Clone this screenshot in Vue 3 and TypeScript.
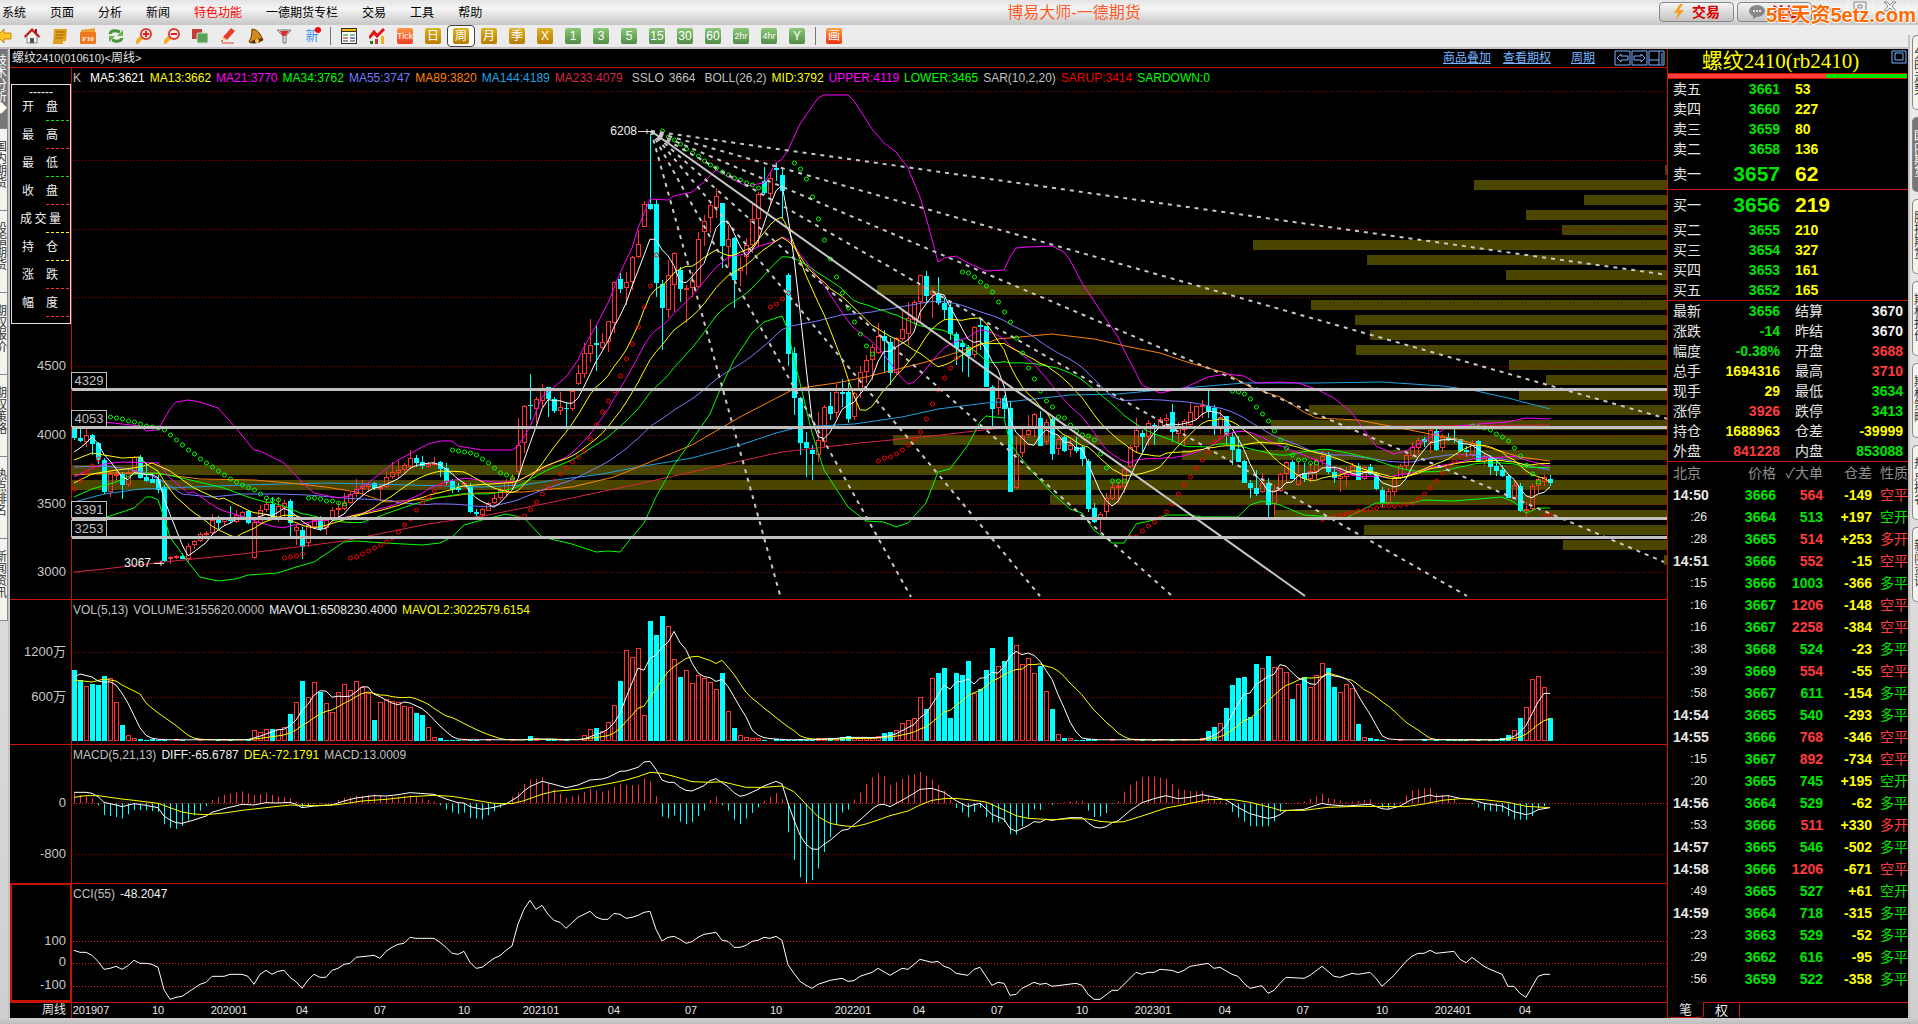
<script setup lang="ts">
type Candle = { up: boolean; top: number; bottom: number; high: number; low: number }
type Tone = 'g' | 'r' | 'y' | 'w'

const PITCH = 6
const FIRST_X = 74
const PLOT_X = 72
const PLOT_W = 1595
const barX = (i: number): number => FIRST_X + i * PITCH

const menus: string[] = ['系统', '页面', '分析', '新闻', '特色功能', '一德期货专栏', '交易', '工具', '帮助']
const periods: { t: string; k: string; wide?: boolean; on?: boolean }[] = [
  { t: 'Tick', k: 'tick', wide: true }, { t: '日', k: 'gold' }, { t: '周', k: 'gold', on: true },
  { t: '月', k: 'gold' }, { t: '季', k: 'gold' }, { t: 'X', k: 'gold' },
  { t: '1', k: 'green' }, { t: '3', k: 'green' }, { t: '5', k: 'green' }, { t: '15', k: 'green' },
  { t: '30', k: 'green' }, { t: '60', k: 'green' }, { t: '2hr', k: 'green', wide: true },
  { t: '4hr', k: 'green', wide: true }, { t: 'Y', k: 'green' },
]
const leftTabs: string[] = ['技术分析◆', '国内期货', '股指期货', '期权报价', '期权策略', '热点排名', '新闻资讯']
const rightTabs: string[] = ['分时走势', '国内期货', '股指期货', '期权报价', '期权策略', '热点排名', '新闻资讯']

const legend: { t: string; c: string }[] = [
  { t: '开盘', c: '#00e600' }, { t: '最高', c: '#ff3232' }, { t: '最低', c: '#00e600' }, { t: '收盘', c: '#ff3232' },
  { t: '成交量', c: '#ffff00' }, { t: '持仓', c: '#ffff00' }, { t: '涨跌', c: '#ff3232' }, { t: '幅度', c: '#ff3232' },
]
const kHead: { t: string; c: string; gap?: boolean }[] = [
  { t: 'K', c: '#c0c0c0' }, { t: 'MA5:3621', c: '#fff', gap: true }, { t: 'MA13:3662', c: '#ff0' }, { t: 'MA21:3770', c: '#f0f' },
  { t: 'MA34:3762', c: '#0f0' }, { t: 'MA55:3747', c: '#7878ff' }, { t: 'MA89:3820', c: '#ff8000' },
  { t: 'MA144:4189', c: '#20a0e0' }, { t: 'MA233:4079', c: '#d22846' }, { t: 'SSLO', c: '#c0c0c0', gap: true },
  { t: '3664', c: '#c0c0c0' }, { t: 'BOLL(26,2)', c: '#c0c0c0', gap: true }, { t: 'MID:3792', c: '#ff0' },
  { t: 'UPPER:4119', c: '#f0f' }, { t: 'LOWER:3465', c: '#0f0' }, { t: 'SAR(10,2,20)', c: '#c0c0c0' },
  { t: 'SARUP:3414', c: '#f00000' }, { t: 'SARDOWN:0', c: '#0f0' },
]

const candleText = `d428 438 427 440|d438 441 427 442|u435 442 428 447|d435 444 434 455|d443 460 442 464|d460 492 458 494|u474 492 471 497|u474 476 469 482|d474 485 472 499|u473 485 470 487|u457 472 456 474|d457 478 455 479|d477 481 462 482|d479 483 473 483|d479 490 475 493|d487 561 485 562|u557 559 556 564|u556 558 555 559|d556 559 553 559|u546 559 543 563
|u541 545 540 549|u534 541 532 542|u533 535 531 536|u520 533 514 535|d518 523 516 529|u519 522 517 526|d519 521 506 523|u515 522 510 523|u512 518 511 520|d511 523 510 524|u522 558 520 559|u510 523 505 525|u504 510 499 512|d504 519 497 520|u506 520 497 522|u503 508 500 520|d501 523 499 537|u527 531 524 545|d530 547 527 559|u525 543 523 547
|u520 527 518 528|d520 529 516 531|u520 528 518 535|u510 520 507 522|u508 510 502 517|u503 509 493 510|u494 503 492 504|u489 494 479 497|u486 489 480 494|u484 487 482 492|d483 488 482 490|u487 488 484 500|u477 487 471 488|u472 477 462 479|u470 473 461 478|u465 470 463 473|u458 467 450 469|d458 463 455 467|d462 466 456 469|u464 467 462 468
|u463 465 457 466|d462 469 461 477|d468 483 463 485|d481 490 479 493|d488 490 483 492|u483 487 482 488|d486 512 483 513|d512 514 509 516|u509 515 508 517|u503 511 502 511|u498 503 492 504|u490 498 487 500|u482 491 479 497|u478 482 474 487|u445 472 418 477|u406 443 405 453|d405 406 374 420|u399 409 397 423|u388 401 384 407|d387 399 387 417
|d399 411 397 413|u407 411 392 415|d408 409 403 426|u391 409 388 411|u373 384 365 385|u353 374 343 378|u345 354 319 362|d343 345 325 371|u342 348 333 350|u321 342 321 352|u282 323 281 333|d279 289 273 293|u282 288 272 305|u257 282 256 290|u244 257 230 258|u204 227 201 227|d204 209 134 210|d204 283 200 297|d284 308 280 350|u275 310 260 318
|u253 285 252 312|d270 289 267 302|u288 290 285 323|u280 288 272 297|u239 287 232 288|u221 232 215 246|u205 218 202 233|u196 208 188 218|d203 246 203 268|u239 247 225 267|d238 280 237 308|u268 271 257 286|u245 257 238 275|u219 245 203 253|u194 219 192 247|d181 193 167 195|u178 194 172 204|d168 170 163 181|d175 191 168 218|d275 354 273 366
|d353 398 347 415|d398 443 397 455|d442 448 432 477|d450 454 445 480|u440 455 412 462|u407 442 405 447|d406 414 392 420|u392 413 384 418|d392 394 379 407|d392 419 383 423|u393 417 392 420|u372 390 366 398|u360 372 355 383|u347 360 344 380|u336 353 323 354|d336 341 330 373|d342 373 338 385|u338 373 337 375|u329 339 311 341|u318 334 302 345
|u302 320 300 325|u275 302 275 323|d276 296 271 302|u291 295 287 318|d294 303 277 305|d303 310 298 320|d307 334 303 340|d334 348 332 365|d343 347 340 372|d347 356 345 377|u327 355 326 358|d325 327 317 350|d326 387 326 387|d387 409 385 426|u398 408 378 415|d398 409 395 418|d408 492 401 492|u454 488 437 489|u436 453 427 457|u430 435 415 437
|u414 429 413 437|d418 446 411 446|u422 442 419 445|d419 454 417 460|u439 449 437 455|d437 451 436 452|u445 450 440 457|d447 451 437 453|d447 459 446 466|d461 509 459 512|d508 522 503 523|u514 520 512 532|u498 512 493 517|u487 499 482 500|u486 488 482 503|u469 487 466 493|u447 467 445 468|u430 447 418 452|d433 437 430 452|u423 437 420 446
|d425 427 423 445|u419 427 417 427|u418 421 414 427|d412 432 404 442|u428 434 422 444|u421 430 419 446|u412 425 402 426|u406 419 405 420|u405 407 400 418|d406 411 390 418|d408 427 405 435|u417 429 410 434|d416 436 416 445|d437 450 433 465|d449 462 436 462|d461 483 460 483|d483 488 480 498|d488 494 470 496|u483 492 473 493|d483 505 478 520
|u490 504 485 515|u474 491 473 492|u462 474 461 483|d462 479 460 479|u474 485 461 486|d473 479 463 482|u471 479 463 483|u460 472 458 479|u456 461 451 465|d455 472 452 474|d472 478 466 483|u476 479 467 492|u474 477 467 487|u466 475 463 476|d466 480 463 480|u467 479 466 480|d467 474 464 475|d474 489 472 490|d490 503 487 507|u491 503 488 505
|u478 492 476 496|u466 478 464 479|u455 466 452 470|u447 456 442 458|u440 448 438 455|d439 442 437 447|u430 442 428 453|d431 450 427 451|u437 448 434 452|d438 440 433 441|d438 439 428 443|d439 451 439 452|d450 452 446 457|u443 455 440 457|d441 461 440 461|u458 462 454 465|d458 467 455 475|d466 471 457 476|d470 476 465 477|d476 498 475 498
|u485 498 480 499|d486 511 483 512|u509 511 502 517|u486 509 484 511|u479 486 477 493|u477 482 475 486|d479 483 475 486`

const candles: Candle[] = candleText.replace(/\n/g, '').split('|').map((s) => {
  const [top, bottom, high, low] = s.slice(1).split(' ').map(Number)
  return { up: s[0] === 'u', top, bottom, high, low }
})
const closes: number[] = candles.map((c) => (c.up ? c.top : c.bottom))

/* Reads "index:level" pairs */
function keys(text: string): [number, number][] {
  return text.trim().split(/\s+/).map((p) => p.split(':').map(Number) as [number, number])
}
function at(k: [number, number][], i: number): number {
  if (i <= k[0][0]) return k[0][1]
  for (let n = 1; n < k.length; n++) {
    if (i <= k[n][0]) {
      const [a, va] = k[n - 1]
      const [b, vb] = k[n]
      return va + ((vb - va) * (i - a)) / (b - a)
    }
  }
  return k[k.length - 1][1]
}
const line = (k: [number, number][]): string => k.map(([i, v]) => `${barX(i)},${v}`).join(' ')
function average(src: number[], n: number, lead: string): string {
  const k = keys(lead)
  return src.map((_, i) => {
    if (i < n - 1) return `${barX(i)},${at(k, i)}`
    let sum = 0
    for (let j = i - n + 1; j <= i; j++) sum += src[j]
    return `${barX(i)},${(sum / n).toFixed(1)}`
  }).join(' ')
}

const kLines: { c: string; p: string }[] = [
  { c: '#d22846', p: line(keys('0:572 5:569 15:562 28:554 45:541 59:524 69:515 79:503 94:484 100:476 108:465 118:452 131:443 143:436 153:429 158:427 169:428 201:427 246:425')) },
  { c: '#20a0e0', p: line(keys('0:502 5:494 11:489 20:487 28:485 42:483 56:485 68:487 75:485 79:481 88:474 94:467 103:458 111:445 117:433 121:427 130:424 138:417 144:409 152:403 157:401 166:395 174:394 181:390 195:383 207:383 218:382 228:386 233:390 239:398 246:409')) },
  { c: '#ff8000', p: line(keys('0:475 6:473 13:473 21:479 30:480 36:483 42:487 47:492 52:502 59:499 67:493 75:492 83:487 90:477 94:467 103:445 111:417 120:389 127:383 132:377 142:362 150:347 154:339 163:334 170:339 176:347 181:353 186:363 192:373 196:387 201:397 205:412 207:418 214:420 221:428 231:440 236:448 241:457 246:461')) },
  { c: '#7878ff', p: average(closes, 55, '0:467 5:466 8:468 12:473 15:482 18:494 23:497 28:494 34:494 39:495 45:498 54:501') },
  { c: '#0f0', p: average(closes, 34, '0:497 3:489 7:482 10:474 14:473 18:478 25:488 29:497 33:504') },
  { c: '#f0f', p: average(closes, 21, '0:477 3:468 5:464 8:462 14:463 16:478 20:498') },
  { c: '#ff0', p: average(closes, 26, '0:483 3:474 6:471 11:467 13:463 16:471 20:488 25:502') },
  { c: '#ff0', p: average(closes, 13, '0:460 3:453 5:455 8:458 11:457') },
  { c: '#fff', p: average(closes, 5, '0:452 1:448 2:443 3:437') },
  { c: '#f0f', p: line(keys('5:422 11:426 12:431 14:430 16:409 17:402 19:400 21:402 24:408 27:428 30:450 31:451 35:463 38:482 40:493 44:498 46:496 49:483 54:460 59:444 61:441 63:441 64:446 68:450 73:450 74:446 76:427 78:397 82:377 84:360 85:347 87:326 89:303 91:273 93:248 94:228 96:199 99:200 100:196 103:192 105:182 107:170 110:180 112:186 115:183 117:163 118:159 119:150 121:124 124:98 125:95 129:95 130:101 131:110 133:129 135:143 137:152 139:168 141:197 142:217 144:262 145:258 147:256 149:263 152:271 155:270 156:257 157:248 159:247 163:246 165:252 166:260 168:283 171:310 174:337 175:350 177:373 178:385 181:393 185:388 189:377 192:374 195:376 197:383 201:382 204:383 207:389 210:398 213:413 215:430 217:446 220:454 222:451 227:434 229:427 234:424 239:422 242:418 246:419')) },
  { c: '#0f0', p: line(keys('5:518 6:516 8:512 10:508 12:497 13:497 14:500 15:517 16:537 19:562 21:577 24:581 27:579 29:575 34:573 37:567 40:562 45:542 47:541 52:543 58:545 61:543 63:537 65:525 68:520 72:514 75:518 78:537 83:544 87:552 89:551 91:552 93:537 94:530 95:523 97:497 100:465 103:440 106:414 108:385 110:360 113:333 115:322 117:318 118:316 119:330 120:360 121:383 123:433 125:470 129:507 132:521 135:522 137:527 139:523 142:503 144:472 146:469 149:445 151:422 152:416 155:418 156:443 159:467 163:493 166:509 168:513 170:530 173:543 175:543 177:524 180:520 182:515 186:515 188:517 194:517 196:505 198:501 201:505 205:515 212:518 214:512 217:503 223:503 225:500 230:501 236:498 238:497 240:502 242:513 244:508 246:508')) },
]

/* Parabolic SAR dots as runs: start bar, then one level per bar */
function runs(text: string): { x: number; y: number }[] {
  return text.split('/').flatMap((r) => {
    const [s, list] = r.split(':')
    return list.trim().split(' ').map((y, n) => ({ x: barX(Number(s) + n), y: Number(y) }))
  })
}
const sarUp = runs('0:489 481 472 466 459/35:558 557 556 554/46:558 557 554 551 548 545 542 538 532 525 519 510 503 497 491 486 483/74:518 516 510 502 494 487 481 474 468 462 457 451 439 425 412 401 391 376 359 344 327 307 286 255/116:307 304 299 293/134:461 458 457 454 450 445 439 432 419 404 390 378 368 358/176:537 537 531 526 522 518 512 504 494 485 477 468 460 452 442 437 434/208:519 518 517 515 514 513 511 510 509 508 506 506 506 505 504 503 499 494 488 481 473 467 461 456 455/245:516 515')
const sarDown = runs('6:417 418 419 421 422 424 426 427 428 430 435 440 445 450 454 459 463 467 471 475 479 482 485 488 490 494 498 500 500/39:498 498 499 501 501 503 504/63:450 451 452 453 455 459 463 468 473 475 478/98:131 137 140 144 149 153 156 161 165 168 172 175 178 180 183 185 188 189/120:163 169 179 197 219 240 259 277 293 308 322 334 346 354/148:272 273 277 282 286 292 302 312 322 338 353 368 379 391 401 407 417 418 425 431 435 436 440 454 468 481 481 481/193:391 392 394 399 407 414 421 431 440 448 455 460 460 463 463/233:426 427 428 430 434 437 441 448 456 465 474 482')

const profile: [number, number][] = [
  [165, 1665], [180, 1474], [195, 1584], [210, 1526], [225, 1562], [240, 1253], [255, 1367], [270, 1506], [285, 877],
  [300, 1311], [315, 1355], [330, 1370], [345, 1356], [360, 1509], [375, 1546], [390, 1519], [405, 1309], [420, 1271],
  [435, 893], [450, 1182], [465, 72], [480, 72], [495, 1050], [510, 1274], [525, 1364], [540, 1563], [555, 1664],
]
const fans: [number, number, boolean][] = [
  [1668, 275, true], [1668, 419, true], [1664, 562, true], [1467, 596, true], [1305, 596, false],
  [1171, 595, true], [1040, 596, true], [911, 597, true], [780, 595, true],
]
const levels: { v: string; y: number }[] = [
  { v: '4329', y: 389 }, { v: '4053', y: 427 }, { v: '3391', y: 518 }, { v: '3253', y: 537 },
]
const kGrid: number[] = [91, 160, 229, 297, 366, 435, 504, 572]
const kAxis: { t: string; y: number }[] = [
  { t: '4500', y: 366 }, { t: '4000', y: 435 }, { t: '3500', y: 504 }, { t: '3000', y: 572 },
]
const K_TOP = 68
const K_H = 531

/* Volume tops; weeks between the contract months stay near the base line */
const volumes: number[] = candles.map((_, i) => (i % 4 === 1 ? 739 : 740))
'0:670 680 686 684 685 676 678 702 725 735 738 739/30:730 732 729 729 729 727 714 702 681 697 682 692 703 712 692 684 690 681 687 693 720 702 699 701 702 706 707 713 715 727 737 738/76:736/85:735 729 728 731 722 705 681 650 657 648 715 621 635 616 626 659 677 670 683 675 678 682 689 673 711 728 735 737 738 738/124:738 738 738 738 737 736 738 738 738 738 736 733 732 730 723 720 718 697 709 678 673 668 718 673 675 661 693 689 670 648 666 661 637 645 664 658 673 666 691 709 734 738 738/188:738 731 727 723 708 685 678 677 717 664 668 656 667 668 672 699 684 677 687 675 663 668 687 692 684 688 724 737 738/238:738 735 730 718 707 679 676 687 718'
  .split('/').forEach((r) => {
    const [s, list] = r.split(':')
    list.split(' ').forEach((y, n) => { volumes[Number(s) + n] = Number(y) })
  })
const mavol1 = average(volumes, 5, '0:677 1:674 3:677')
const mavol2 = average(volumes, 13, '0:680 3:682 5:679 7:681 8:685 11:694 12:700')

const diff = keys('0:337 2:337 3:340 4:350 5:367 7:375 8:380 10:371 12:376 14:383 15:408 16:420 17:428 18:430 20:420 22:408 23:397 25:386 28:373 30:375 32:368 34:369 36:367 37:373 38:383 40:378 43:375 45:363 47:354 50:347 52:348 54:344 56:338 60:343 62:357 64:368 65:369 66:380 68:388 70:382 72:372 74:350 75:333 76:320 78:304 80:313 82:323 84:315 86:300 88:297 89:292 90:283 91:274 92:273 94:262 95:246 96:244 97:268 98:300 99:307 100:307 101:322 102:331 103:333 105:317 106:302 107:296 109:320 110:338 111:349 112:345 114:328 115:318 117:304 118:312 119:370 120:420 121:465 122:493 123:507 124:508 125:493 126:481 128:451 129:448 131:420 133:387 134:375 135:373 136:380 138:361 140:340 141:328 143:325 145:337 147:362 149:380 150:374 151:370 153:403 155:418 156:445 157:454 159:437 160:425 161:427 162:418 163:421 166:413 168:413 169:428 170:441 171:444 172:440 173:428 174:423 176:392 178:368 180:356 182:347 184:356 186:352 188:344 190:351 192:360 194:382 196:401 198:411 199:415 200:412 201:404 202:392 205:388 207:376 208:370 209:374 212:378 216:373 218:386 219:388 221:378 223:358 226:345 227:350 229:347 231:355 233:359 235:370 238:378 240:395 242:404 243:399 244:389 246:383')
const dea = keys('0:352 2:347 4:347 8:357 10:361 14:370 16:383 18:396 20:402 22:404 25:399 28:391 32:383 36:375 40:377 44:374 48:363 52:358 56:350 60:346 63:349 66:358 70:370 73:371 75:362 78:343 80:334 84:328 87:318 90:308 92:300 94:290 96:277 98:280 100:289 103:305 106:307 108:305 112:322 115:322 118:318 120:335 122:373 124:410 126:430 128:437 130:440 132:432 134:420 136:407 139:393 141:375 143:361 145:356 147:355 150:361 152:366 155:390 157:407 159:415 163:419 166:416 169:417 171:424 173:427 175:425 178:408 182:384 185:374 189:359 193:358 196:367 200:385 201:391 205:391 209:382 214:379 222:380 225:372 228:361 231:356 235:359 239:367 242:379 245:382 246:383')
const MACD_ZERO = 370
const hist = candles.map((_, i) => {
  const v = 2 * (at(dea, i) - at(diff, i))
  return { x: barX(i), y: MACD_ZERO - v, up: v >= 0 }
})
const cci = line(keys('0:811 1:817 2:817 3:826 4:844 5:868 6:865 7:859 8:868 9:857 10:841 11:850 12:850 13:853 14:862 15:929 16:958 17:952 18:949 19:937 21:913 22:907 23:889 25:889 26:883 28:883 29:889 30:913 31:883 32:871 33:883 34:874 35:871 36:892 37:905 38:925 39:900 40:883 41:892 42:892 43:871 44:865 45:853 46:850 47:832 50:826 51:835 52:814 53:802 54:793 55:790 56:772 57:775 60:775 61:787 62:802 63:820 64:823 65:814 66:847 67:865 68:862 70:835 71:827 72:811 73:798 74:732 75:688 76:661 77:688 78:676 79:703 80:721 81:727 82:745 84:712 86:694 87:711 88:718 89:718 90:700 91:703 92:715 93:712 94:706 95:697 96:694 97:748 98:783 99:772 100:769 101:778 102:790 103:785 104:772 105:763 107:757 108:781 109:784 110:802 111:802 112:796 113:784 114:781 115:772 116:775 117:769 118:781 119:854 120:880 121:904 122:916 123:925 124:913 126:901 128:895 129:904 130:902 131:889 133:877 134:865 136:886 138:865 139:868 141:838 143:847 144:844 145:859 146:865 147:880 149:886 150:868 151:862 153:916 154:907 155:910 156:946 157:943 158:925 160:907 161:913 162:910 163:919 167:910 168:916 169:943 170:958 171:958 173:931 174:931 177:877 178:883 179:877 180:877 181:868 183:871 184:878 185:871 186:859 189:850 190:865 191:862 193:883 194:889 195:910 196:925 198:917 199:940 200:931 201:910 202:892 205:895 206:886 208:859 210:889 211:892 213:880 214:883 216:877 217:895 218:919 220:886 222:844 223:829 224:820 225:820 226:811 227:820 230:814 231:838 232:848 233:832 235:859 236:868 238:883 239:919 240:919 241:940 242:952 244:889 245:883 246:883'))

const dates: [string, number][] = [
  ['201907', 91], ['10', 158], ['202001', 229], ['04', 302], ['07', 380], ['10', 464], ['202101', 541], ['04', 614],
  ['07', 691], ['10', 776], ['202201', 853], ['04', 919], ['07', 997], ['10', 1082], ['202301', 1153], ['04', 1225],
  ['07', 1303], ['10', 1382], ['202401', 1453], ['04', 1525],
]
const pctY = (y: number, top: number, h: number): string => `${((y - top) / h) * 100}%`
const pctX = (x: number): string => `${((x - PLOT_X) / PLOT_W) * 100}%`

const sells: [string, string, string][] = [
  ['卖五', '3661', '53'], ['卖四', '3660', '227'], ['卖三', '3659', '80'], ['卖二', '3658', '136'], ['卖一', '3657', '62'],
]
const buys: [string, string, string][] = [
  ['买一', '3656', '219'], ['买二', '3655', '210'], ['买三', '3654', '327'], ['买四', '3653', '161'], ['买五', '3652', '165'],
]
const stats: [string, string, Tone, string, string, Tone][] = [
  ['最新', '3656', 'g', '结算', '3670', 'w'], ['涨跌', '-14', 'g', '昨结', '3670', 'w'],
  ['幅度', '-0.38%', 'g', '开盘', '3688', 'r'], ['总手', '1694316', 'y', '最高', '3710', 'r'],
  ['现手', '29', 'y', '最低', '3634', 'g'], ['涨停', '3926', 'r', '跌停', '3413', 'g'],
  ['持仓', '1688963', 'y', '仓差', '-39999', 'y'], ['外盘', '841228', 'r', '内盘', '853088', 'g'],
]
const ticks: [string, string, string, string, string, Tone][] = [
  ['14:50', '3666', '564', '-149', '空平', 'r'], [':26', '3664', '513', '+197', '空开', 'g'], [':28', '3665', '514', '+253', '多开', 'r'],
  ['14:51', '3666', '552', '-15', '空平', 'r'], [':15', '3666', '1003', '-366', '多平', 'g'], [':16', '3667', '1206', '-148', '空平', 'r'],
  [':16', '3667', '2258', '-384', '空平', 'r'], [':38', '3668', '524', '-23', '多平', 'g'], [':39', '3669', '554', '-55', '空平', 'r'],
  [':58', '3667', '611', '-154', '多平', 'g'], ['14:54', '3665', '540', '-293', '多平', 'g'], ['14:55', '3666', '768', '-346', '空平', 'r'],
  [':15', '3667', '892', '-734', '空平', 'r'], [':20', '3665', '745', '+195', '空开', 'g'], ['14:56', '3664', '529', '-62', '多平', 'g'],
  [':53', '3666', '511', '+330', '多开', 'r'], ['14:57', '3665', '546', '-502', '多平', 'g'], ['14:58', '3666', '1206', '-671', '空平', 'r'],
  [':49', '3665', '527', '+61', '空开', 'g'], ['14:59', '3664', '718', '-315', '多平', 'g'], [':23', '3663', '529', '-52', '多平', 'g'],
  [':29', '3662', '616', '-95', '多平', 'g'], [':56', '3659', '522', '-358', '多平', 'g'],
]
</script>

<template>
  <div class="app">
    <header class="menubar">
      <nav class="menus">
        <a v-for="m in menus" :key="m" href="#" :class="{ hot: m === '特色功能' }">{{ m }}</a>
      </nav>
      <h1>博易大师-一德期货</h1>
      <div class="actions">
        <button type="button"><svg width="12" height="16" viewBox="0 0 12 16"><path d="M7 0 1 9h4l-2 7 8-10H6l4-6z" fill="#f5a020" /></svg>交易</button>
        <button type="button"><svg width="16" height="14" viewBox="0 0 16 14"><ellipse cx="8" cy="6" rx="8" ry="6" fill="#888" /><path d="M4 10v4l5-3z" fill="#888" /><g fill="#fff"><circle cx="5" cy="6" r="1" /><circle cx="8" cy="6" r="1" /><circle cx="11" cy="6" r="1" /></g></svg>论坛</button>
      </div>
      <svg class="winctl" width="84" height="14" viewBox="0 0 84 14"><path d="M0 0v9q0 4 4 4h76q4 0 4-4V0M24 0v13M49 0v13" fill="none" stroke="#f8f8f8" /><path d="M6 9h11v3H6zM30 2h12v9H30zM34 5h4v3h-4zM60 2h3l3 3 3-3h3l-4 4 4 5h-3l-3-3-3 3h-3l4-5z" fill="#eee" stroke="#888" /></svg>
      <span class="mark">5E天资5etz.com</span>
    </header>

    <div class="toolbar">
      <button type="button" aria-label="后退"><svg viewBox="0 0 16 16"><path d="M1 8l7-7v4h7v6H8v4z" fill="#ffc428" stroke="#c88a10" /></svg></button>
      <button type="button" aria-label="首页"><svg viewBox="0 0 16 16"><path d="M3 8v7h10V8L8 3z" fill="#f2f2f2" stroke="#888" /><path d="M0 8l8-8 8 8-1 2-7-7-7 7z" fill="#c81e1e" /><path d="M11 1h2v4h-2z" fill="#a01010" /><path d="M6 10h4v5H6z" fill="#555" /></svg></button>
      <button type="button" aria-label="公告"><svg viewBox="0 0 16 16"><path d="M2 1h13l-1 12-3 3H1z" fill="#e0a020" /><path d="M4 4h9M4 7h9M3 10h8" stroke="#9a6400" /><path d="M11 16v-3h3z" fill="#fff0b0" /></svg></button>
      <button type="button" aria-label="F10"><svg viewBox="0 0 16 16"><path d="M1 2l14-2v4H1z" fill="#f0a030" /><rect x="0" y="4" width="16" height="12" rx="1" fill="#f07820" /><text x="8" y="13" text-anchor="middle" class="f10">F10</text></svg></button>
      <button type="button" aria-label="刷新"><svg viewBox="0 0 16 16" fill="none" stroke="#46963c" stroke-width="3"><path d="M2 6q1-4 7-3l3 1M14 10q-1 4-7 3l-3-1" /><path d="M15 2v6H9zM1 14V8h6z" fill="#64b450" stroke="none" /></svg></button>
      <button type="button" aria-label="放大"><svg viewBox="0 0 16 16"><path d="M1 14l5-5" stroke="#f0b020" stroke-width="4" stroke-linecap="round" /><circle cx="10" cy="6" r="5" fill="#ffeaea" stroke="#e03c32" stroke-width="2" /><path d="M7 6h6M10 3v6" stroke="#e02020" stroke-width="2" /></svg></button>
      <button type="button" aria-label="缩小"><svg viewBox="0 0 16 16"><path d="M1 14l5-5" stroke="#f0b020" stroke-width="4" stroke-linecap="round" /><circle cx="10" cy="6" r="5" fill="#ffeaea" stroke="#e03c32" stroke-width="2" /><path d="M7 6h6" stroke="#e02020" stroke-width="2" /></svg></button>
      <button type="button" aria-label="叠加"><svg viewBox="0 0 16 16"><rect x="0" y="1" width="10" height="10" fill="#c83c3c" /><rect x="5" y="5" width="11" height="10" rx="1" fill="#5aa05a" stroke="#cde0cd" /></svg></button>
      <button type="button" aria-label="画线"><svg viewBox="0 0 16 16"><path d="M3 9l8-9 4 3-8 9z" fill="#e63c28" /><path d="M3 9l-2 5 6-2z" fill="#f5d2a0" /><path d="M1 14l1-2 1 1z" fill="#222" /><path d="M2 15h12" stroke="#e63c28" /></svg></button>
      <button type="button" aria-label="预警"><svg viewBox="0 0 16 16"><path d="M4 1q5 0 8 5l3 6-13 3-1-2q3-3 3-12z" fill="#d28c1e" stroke="#643c00" /><ellipse cx="9" cy="13" rx="6" ry="2" transform="rotate(-14 9 13)" fill="#5a3200" /><circle cx="9" cy="13" r="2" fill="#ffd060" /></svg></button>
      <button type="button" aria-label="筛选"><svg viewBox="0 0 16 16"><path d="M1 2h14l-5 6v7H7V8z" fill="#ddd" stroke="#777" /><path d="M4 3h9L9 8H7z" fill="#e02828" /></svg></button>
      <button type="button" class="new">新<i></i></button>
      <span class="sep"></span>
      <button type="button" aria-label="报价"><svg viewBox="0 0 16 16"><rect x="0" y="0" width="16" height="16" fill="#333" /><rect x="1" y="1" width="14" height="2" fill="#ffb400" /><rect x="1" y="4" width="14" height="11" fill="#fff" /><path d="M2 7h5M9 7h5" stroke="#008c00" /><path d="M2 10h5" stroke="#c00" /><path d="M9 10h5" stroke="#00c" /><path d="M2 13h5M9 13h5" stroke="#333" /></svg></button>
      <button type="button" aria-label="走势"><svg viewBox="0 0 16 16"><path d="M1 13h3v3H1z" fill="#1e7828" /><path d="M6 11h3v5H6z" fill="#c83c28" /><path d="M12 8h3v8h-3z" fill="#e6b428" /><path d="M0 10l5-6 3 4 7-7" fill="none" stroke="#e61414" stroke-width="3" /></svg></button>
      <button v-for="p in periods" :key="p.t" type="button" :class="{ on: p.on }"><b :class="[p.k, { wide: p.wide }]">{{ p.t }}</b></button>
      <span class="sep"></span>
      <button type="button"><b class="paint">画</b></button>
    </div>

    <div class="body">
      <aside class="strip left">
        <div v-for="(t, i) in leftTabs" :key="t" class="tab" :class="{ active: i === 0 }">{{ t }}</div>
      </aside>

      <main class="chart">
        <div class="caption">
          <span class="name">螺纹<em>2410(010610)&lt;</em>周线<em>&gt;</em></span>
          <a href="#" class="l1">商品叠加</a><a href="#" class="l2">查看期权</a><a href="#" class="l3">周期</a>
          <span class="arrows">
            <svg viewBox="0 0 16 15"><path d="M0 0h15v14H0zM2 7l4-4v2h7v4H6v2z" /></svg>
            <svg viewBox="0 0 16 15"><path d="M0 0h15v14H0zM13 7L9 3v2H2v4h7v2z" /></svg>
            <svg viewBox="0 0 16 15"><path d="M0 0h15v14H0zM0 9h10M10 0v14M13 2v11" /></svg>
          </span>
        </div>

        <section class="pane k">
          <div class="axis">
            <div class="legend">
              <p class="dashes">------</p>
              <div v-for="l in legend" :key="l.t" class="row">
                <p :class="{ three: l.t.length === 3 }"><span v-for="ch in l.t" :key="ch">{{ ch }}</span></p>
                <hr :style="{ borderColor: l.c }">
              </div>
            </div>
            <span v-for="a in kAxis" :key="a.t" class="num" :style="{ top: pctY(a.y, K_TOP, K_H) }">{{ a.t }}</span>
          </div>
          <div class="plot">
            <svg class="canvas" :viewBox="`${PLOT_X} ${K_TOP} ${PLOT_W} ${K_H}`" preserveAspectRatio="none">
              <rect v-for="[y, x] in profile" :key="y" :x="x" :y="y" :width="1667 - x" height="10" fill="#4a4600" />
              <line v-for="y in kGrid" :key="y" x1="73" x2="1667" :y1="y + 0.5" :y2="y + 0.5" class="grid" />
              <g v-for="(c, i) in candles" :key="i" :class="c.up ? 'up' : 'down'">
                <template v-if="c.up">
                  <path :d="`M${barX(i) + 0.5} ${c.high}V${c.top}M${barX(i) + 0.5} ${c.bottom}V${c.low}`" />
                  <rect :x="barX(i) - 1.5" :y="c.top + 0.5" width="4" :height="Math.max(1, c.bottom - c.top - 1)" />
                </template>
                <template v-else>
                  <path :d="`M${barX(i) + 0.5} ${c.high}V${c.low}`" />
                  <rect :x="barX(i) - 2" :y="c.top" width="5" :height="c.bottom - c.top" />
                </template>
              </g>
              <polyline v-for="(l, i) in kLines" :key="i" :points="l.p" :stroke="l.c" class="ln" />
              <ellipse v-for="(s, i) in sarUp" :key="'u' + i" :cx="s.x + 0.5" :cy="s.y" rx="2" ry="2" stroke="#ff0000" class="ln" />
              <ellipse v-for="(s, i) in sarDown" :key="'d' + i" :cx="s.x + 0.5" :cy="s.y" rx="2" ry="2" stroke="#0f0" class="ln" />
              <rect v-for="l in levels" :key="l.v" x="71" :y="l.y - 1" width="1597" height="3" fill="#c0c0c0" />
              <line v-for="[x, y, d] in fans" :key="x + y" x1="651" y1="131" :x2="x" :y2="y" class="fan" :class="{ dash: d }" />
              <path d="M638 131.5h12M647 129v5M154 563.5h10M161 561v5" stroke="#ddd" />
            </svg>
            <div class="head"><span v-for="h in kHead" :key="h.t" :class="{ gap: h.gap }" :style="{ color: h.c }">{{ h.t }}</span></div>
            <span v-for="l in levels" :key="l.v" class="level" :style="{ top: pctY(l.y, K_TOP, K_H) }">{{ l.v }}</span>
            <span class="peak" :style="{ left: pctX(637), top: pctY(131, K_TOP, K_H) }">6208</span>
            <span class="peak" :style="{ left: pctX(151), top: pctY(563, K_TOP, K_H) }">3067</span>
          </div>
        </section>

        <section class="pane vol">
          <div class="axis">
            <span class="num" :style="{ top: pctY(652, 600, 144) }">1200万</span>
            <span class="num" :style="{ top: pctY(697, 600, 144) }">600万</span>
          </div>
          <div class="plot">
            <svg class="canvas" :viewBox="`${PLOT_X} 600 ${PLOT_W} 144`" preserveAspectRatio="none">
              <line x1="73" x2="1667" y1="652.5" y2="652.5" class="grid" />
              <line x1="73" x2="1667" y1="697.5" y2="697.5" class="grid" />
              <g v-for="(v, i) in volumes" :key="i" :class="candles[i].up ? 'up' : 'down'">
                <rect v-if="candles[i].up" :x="barX(i) - 1.5" :y="v + 0.5" width="4" :height="Math.max(0, 740 - v)" />
                <rect v-else :x="barX(i) - 2" :y="v" width="5" :height="741 - v" />
              </g>
              <polyline :points="mavol2" stroke="#ff0" class="ln" />
              <polyline :points="mavol1" stroke="#fff" class="ln" />
            </svg>
            <div class="head"><span>VOL(5,13)</span><span>VOLUME:3155620.0000</span><span class="w">MAVOL1:6508230.4000</span><span class="y">MAVOL2:3022579.6154</span></div>
          </div>
        </section>

        <section class="pane macd">
          <div class="axis">
            <span class="num" :style="{ top: pctY(370, 195, 414) }">0</span>
            <span class="num" :style="{ top: pctY(523, 195, 414) }">-800</span>
          </div>
          <div class="plot">
            <svg class="canvas" :viewBox="`${PLOT_X} 195 ${PLOT_W} 414`" preserveAspectRatio="none">
              <line x1="73" x2="1667" y1="370.5" y2="370.5" class="grid bright" />
              <line x1="73" x2="1667" y1="523.5" y2="523.5" class="grid" />
              <line v-for="h in hist" :key="h.x" :x1="h.x + 0.5" :x2="h.x + 0.5" :y1="MACD_ZERO" :y2="h.y" :stroke="h.up ? '#ff3232' : '#00ffff'" class="ln" />
              <polyline :points="line(diff)" stroke="#fff" class="ln" />
              <polyline :points="line(dea)" stroke="#ff0" class="ln" />
            </svg>
            <div class="head"><span>MACD(5,21,13)</span><span class="w">DIFF:-65.6787</span><span class="y">DEA:-72.1791</span><span>MACD:13.0009</span></div>
          </div>
        </section>

        <section class="pane cci">
          <div class="axis selected">
            <span class="num" :style="{ top: pctY(784, 612, 354) }">100</span>
            <span class="num" :style="{ top: pctY(850, 612, 354) }">0</span>
            <span class="num" :style="{ top: pctY(919, 612, 354) }">-100</span>
          </div>
          <div class="plot">
            <svg class="canvas" :viewBox="`${PLOT_X} 612 ${PLOT_W} 354`" preserveAspectRatio="none">
              <line v-for="y in [784, 850, 919]" :key="y" x1="73" x2="1667" :y1="y + 0.5" :y2="y + 0.5" class="grid bright" />
              <polyline :points="cci" stroke="#fff" class="ln" />
            </svg>
            <div class="head"><span>CCI(55)</span><span class="w">-48.2047</span></div>
          </div>
        </section>

        <footer class="dates">
          <div class="axis">周线</div>
          <div class="plot"><span v-for="[t, x] in dates" :key="x" :style="{ left: pctX(x) }">{{ t }}</span></div>
        </footer>
      </main>

      <section class="quote">
        <h2>螺纹2410(rb2410)<svg viewBox="0 0 16 14"><path d="M1 1h14v12H1zM4 3h8v7H4z" /></svg></h2>
        <div class="ratio"><i></i></div>
        <table class="book">
          <colgroup><col class="c1"><col class="c2"><col></colgroup>
          <tbody><tr v-for="r in sells" :key="r[0]" :class="{ big: r[0] === '卖一' }"><th scope="row">{{ r[0] }}</th><td class="num g">{{ r[1] }}</td><td class="lot y">{{ r[2] }}</td></tr></tbody>
        </table>
        <table class="book">
          <colgroup><col class="c1"><col class="c2"><col></colgroup>
          <tbody><tr v-for="r in buys" :key="r[0]" :class="{ big: r[0] === '买一' }"><th scope="row">{{ r[0] }}</th><td class="num g">{{ r[1] }}</td><td class="lot y">{{ r[2] }}</td></tr></tbody>
        </table>
        <table class="book">
          <colgroup><col class="c1"><col class="c2"><col class="c3"><col></colgroup>
          <tbody>
            <tr v-for="s in stats" :key="s[0]">
              <th scope="row">{{ s[0] }}</th><td class="num" :class="s[2]">{{ s[1] }}</td>
              <th scope="row" class="second">{{ s[3] }}</th><td class="num end" :class="s[5]">{{ s[4] }}</td>
            </tr>
          </tbody>
        </table>
        <table class="ticks">
          <colgroup><col class="t1"><col class="t2"><col class="t3"><col class="t4"><col></colgroup>
          <thead><tr><th class="time">北京</th><th>价格</th><th>✓大单</th><th>仓差</th><th>性质</th></tr></thead>
          <tbody>
            <tr v-for="(t, i) in ticks" :key="i">
              <td :class="t[0].length > 3 ? 'time' : 'sec'">{{ t[0] }}</td><td class="g">{{ t[1] }}</td>
              <td :class="t[5]">{{ t[2] }}</td><td class="y">{{ t[3] }}</td><td class="kind" :class="t[5]">{{ t[4] }}</td>
            </tr>
          </tbody>
        </table>
        <div class="tabs"><button type="button" class="cur">笔</button><button type="button">权</button></div>
      </section>

      <aside class="strip right">
        <div v-for="(t, i) in rightTabs" :key="t" class="tab" :class="{ active: i === 1 }">{{ t }}</div>
      </aside>
    </div>
    <div class="status"></div>
  </div>
</template>

<style>
body { background: #d4d4d4; }
</style>

<style scoped>
* { box-sizing: border-box; margin: 0; padding: 0; }
.app { height: 100vh; min-height: 1000px; display: flex; flex-direction: column; overflow: hidden; background: #000; font: 12px/16px "Liberation Sans", "Noto Sans CJK SC", sans-serif; }
button { border: 0; background: none; font: inherit; }
.menubar { position: relative; flex: none; height: 25px; display: grid; grid-template-columns: 1fr auto 1fr; align-items: center; background: linear-gradient(#e4e4e4, #f5f5f5 35%, #c6c6c6); }
.menus { display: flex; gap: 24px; padding-left: 2px; }
.menus a { color: #000; text-decoration: none; white-space: nowrap; }
.menus a.hot { color: #f00; }
h1 { font-size: 16px; font-weight: 400; color: #ff5a28; padding-left: 230px; }
.actions { position: absolute; right: 106px; top: 2px; display: flex; gap: 3px; }
.actions button { width: 75px; height: 20px; border: 1px solid #888; border-radius: 4px; background: linear-gradient(#f4f4f4, #c4c4c4); color: #dc0000; font-size: 14px; font-weight: 700; display: flex; align-items: center; justify-content: center; gap: 7px; }
.winctl { position: absolute; right: 10px; top: 0; }
.mark { position: absolute; right: 2px; top: 4px; font: 700 20px/22px "Liberation Sans", "Noto Sans CJK SC", sans-serif; color: #ff6a00; text-shadow: 1px 0 #fff, -1px 0 #fff, 0 1px #fff, 0 -1px #fff; }
.toolbar { flex: none; height: 24px; display: flex; background: #ececec; border-bottom: 2px solid #c8c0c4; }
.toolbar button { width: 28px; height: 22px; flex: none; display: flex; align-items: center; justify-content: center; position: relative; }
.toolbar button:first-child { margin-left: -10px; }
.toolbar button svg { width: 16px; height: 16px; }
.f10 { font: 700 7px "Liberation Serif", serif; fill: #fff; }
.toolbar .new { color: #3c8cf0; font-size: 13px; }
.new i { position: absolute; right: 5px; top: 2px; width: 6px; height: 6px; border-radius: 50%; background: #f00; }
.toolbar .on { border: 1px solid #444; border-radius: 4px; background: #fff; }
.toolbar b { width: 16px; height: 16px; border-radius: 2px; color: #fff; font-weight: 400; font-size: 12px; line-height: 16px; text-align: center; }
b.gold { background: linear-gradient(#deb228, #b87c00); }
b.green { background: linear-gradient(#8cc878, #508c46); }
b.tick { background: linear-gradient(#ff9646, #f03c1e); }
b.paint { background: linear-gradient(#ffa03c, #f03214); }
.toolbar b.wide { font-size: 9px; }
.sep { width: 9px; height: 18px; margin-top: 2px; flex: none; background: linear-gradient(#777, #777) 4px 0 / 1px 100% no-repeat; }
.body { flex: 1; display: flex; min-height: 0; }
.strip { width: 10px; flex: none; overflow: hidden; background: linear-gradient(#ececec, #cfcfcf); display: flex; flex-direction: column; }
.left { border-right: 2px solid #c8c0c4; }
.tab { width: 18px; height: 82px; padding: 12px 0 0 3px; margin-left: -10px; font-size: 12px; line-height: 12px; color: #333; background: #f4f4ee; border: 1px solid #888; border-width: 0 1px 1px 0; text-align: right; word-break: break-all; overflow: hidden; }
.left .tab.active { height: 80px; padding-top: 6px; }
.tab.active { background: #777; color: #fff; }
.right { border-left: 2px solid #c8c0c4; padding-left: 2px; margin-top: -14px; }
.right .tab { margin-left: 0; height: 75px; margin-bottom: 7px; flex: none; border-width: 1px 0 1px 1px; border-radius: 5px 0 0 5px; padding: 12px 0 0 1px; text-align: left; width: 14px; }
.chart { flex: 1; min-width: 0; display: grid; grid-template-columns: minmax(0, 1fr); grid-template-rows: 18px minmax(0, 532fr) minmax(0, 145fr) minmax(0, 139fr) minmax(0, 119fr) 16px; color: #c0c0c0; }
.caption { display: flex; align-items: center; padding: 0 2px; color: #e0e0e0; }
.name { flex: 1; }
.name em { font: 11px "Liberation Sans", sans-serif; }
.caption a { color: #78b4ff; margin-left: 12px; }
.caption .l3 { margin-left: 20px; }
.arrows { display: flex; gap: 1px; margin-left: 20px; }
.arrows svg { width: 16px; height: 15px; fill: none; stroke: #78b4ff; overflow: visible; }
.pane { display: flex; min-height: 0; border-top: 1px solid #c81400; }
.axis { position: relative; width: 61px; flex: none; }
.axis.selected { border: 2px solid #c81400; border-right-width: 1px; border-top-width: 1px; }
.axis > .num { position: absolute; right: 5px; font-size: 13px; line-height: 16px; margin-top: -8px; color: #c8c8c8; }
.selected > .num { right: 4px; }
.plot { position: relative; flex: 1; min-width: 0; border-left: 1px solid #c81400; }
.canvas { position: absolute; inset: 0; width: 100%; height: 100%; }
.head { position: relative; display: flex; gap: 5px; padding: 2px 0 0 1px; white-space: pre; }
.head .gap { margin-left: 4px; }
.w { color: #f0f0f0; }
.y { color: #ff0; }
.g { color: #00e600; }
.r { color: #ff3c3c; }
.grid { stroke: #a00000; stroke-dasharray: 1 2; vector-effect: non-scaling-stroke; }
.grid.bright { stroke: #e01e14; }
.ln { fill: none; stroke-width: 1; vector-effect: non-scaling-stroke; }
.up path, .up rect { fill: none; stroke: #ff3232; }
.down path { stroke: #00ffff; }
.down rect { fill: #00ffff; }
.fan { stroke: #c8c8c8; stroke-width: 2; }
.dash { stroke-dasharray: 4 5; }
.level { position: absolute; left: -1px; height: 17px; margin-top: -17px; width: 36px; border: 1px solid #c0c0c0; background: #000; font-size: 13px; line-height: 16px; text-align: center; }
.peak { position: absolute; transform: translate(-100%, -50%); color: #f0f0f0; }
.legend { margin: 16px 0 0 1px; width: 60px; height: 240px; border: 1px solid #e0e0e0; color: #f0f0f0; line-height: 14px; }
.dashes { height: 15px; text-align: center; }
.row { height: 28px; display: flex; flex-direction: column; }
.row p { display: flex; justify-content: space-between; padding: 0 12px 0 10px; height: 20px; }
.row p.three { padding: 0 9px 0 8px; }
.row hr { border: 0; border-top: 1px dashed; width: 23px; align-self: flex-end; margin: 0 1px 0 0; }
.dates { display: flex; border-top: 1px solid #c81400; color: #e6e6e6; }
.dates .axis { text-align: right; padding-right: 5px; line-height: 15px; }
.dates .plot span { position: absolute; transform: translateX(-50%); font-size: 11px; line-height: 15px; }
.quote { width: 241px; flex: none; border-left: 1px solid #c81400; display: flex; flex-direction: column; color: #e6e6e6; }
h2 { position: relative; flex: none; height: 24px; font: 400 21px/24px "Liberation Serif", "Noto Sans CJK SC", serif; color: #ff0; text-align: center; padding-right: 15px; }
h2 svg { position: absolute; right: 1px; top: 1px; width: 16px; height: 14px; fill: none; stroke: #78b4ff; }
.ratio { flex: none; height: 6px; border: 1px solid #c81400; border-width: 1px 0; display: flex; background: #00e600; margin-right: 1px; }
.ratio i { width: 66%; background: #ff3c3c; }
table { width: 100%; table-layout: fixed; border-collapse: separate; border-spacing: 0; flex: none; }
.book { border-bottom: 1px solid #c81400; }
.book tr { height: 20px; }
.book tr.big { height: 30px; }
th, td { white-space: nowrap; line-height: 18px; }
th { font-size: 14px; font-weight: 400; text-align: left; padding-left: 5px; }
td { font-size: 14px; font-weight: 700; }
.big td { font-size: 21px; }
td.num { text-align: right; }
.lot, .second { padding-left: 15px; }
.end { padding-right: 5px; }
.c1 { width: 45px; }
.c2 { width: 67px; }
.c3 { width: 52px; }
.t1 { width: 39px; }
.t2 { width: 69px; }
.t3 { width: 47px; }
.t4 { width: 49px; }
.ticks tr { height: 22px; }
.ticks th { color: #909090; padding: 0; text-align: right; }
.ticks td { text-align: right; }
.ticks .time { text-align: left; padding-left: 5px; }
.ticks .sec { font-size: 12px; font-weight: 400; }
.ticks .kind { font-weight: 400; }
.tabs { margin-top: auto; height: 16px; flex: none; display: flex; border-top: 1px solid #c81400; }
.tabs button { width: 36px; color: #e6e6e6; font-size: 13px; line-height: 14px; border-right: 1px solid #c81400; }
.tabs .cur { border-bottom: 1px solid #c81400; margin-top: -1px; background: #000; border-radius: 0 0 4px 4px; }
.status { flex: none; height: 6px; background: linear-gradient(#cfcfcf, #bdbdbd); }
</style>
